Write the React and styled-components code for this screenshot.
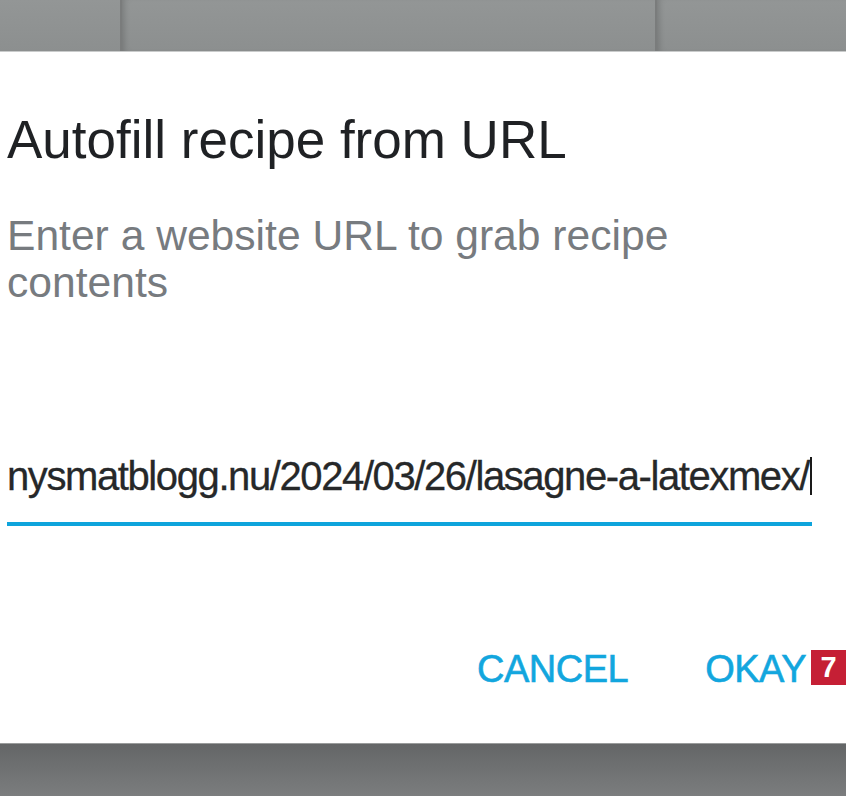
import React from 'react';
import styled, { createGlobalStyle } from 'styled-components';

const GlobalStyle = createGlobalStyle`
  html, body {
    margin: 0;
    padding: 0;
    background: #7b7e7f;
  }
  body {
    font-family: "Liberation Sans", Arial, sans-serif;
  }
`;

const App = () => (
  <>
    <GlobalStyle />
    <Page>
      <TopBackdrop>
        <Panel />
        <Panel edge />
        <Panel edge />
      </TopBackdrop>
      <Dialog>
        <Title>Autofill recipe from URL</Title>
        <Subtitle>Enter a website URL to grab recipe contents</Subtitle>
        <Field>
          <FieldText>
            nysmatblogg.nu/2024/03/26/lasagne-a-latexmex/
            <Caret />
          </FieldText>
        </Field>
        <Actions>
          <ActionButton>CANCEL</ActionButton>
          <ActionButton>
            OKAY
            <Badge>7</Badge>
          </ActionButton>
        </Actions>
      </Dialog>
      <BottomBackdrop />
    </Page>
  </>
);

export default App;

const Page = styled.div`
  width: 846px;
  height: 796px;
  display: flex;
  flex-direction: column;
  overflow: hidden;
`;

const TopBackdrop = styled.div`
  height: 52px;
  display: grid;
  grid-template-columns: 120px 535px 1fr;
  border-bottom: 1px solid #c9cbcb;
  box-sizing: border-box;
`;

const Panel = styled.div`
  background: linear-gradient(#939696, #8c8f8f);
  ${(p) =>
    p.edge &&
    `
    border-left: 2px solid #7a7c7c;
    box-shadow: inset 6px 0 6px -4px rgba(0, 0, 0, 0.18);
  `}
`;

const Dialog = styled.div`
  height: 691px;
  background: #ffffff;
  box-sizing: border-box;
  padding: 0 34px 0 7px;
  display: flex;
  flex-direction: column;
`;

const Title = styled.h1`
  margin: 58px 0 0;
  font-size: 53px;
  line-height: 60px;
  font-weight: 400;
  color: #1f2124;
`;

const Subtitle = styled.p`
  margin: 42px 0 0;
  font-size: 42.6px;
  line-height: 47px;
  color: #777b7f;
`;

const Field = styled.div`
  margin-top: 146px;
  padding-bottom: 22px;
  border-bottom: 4px solid #0ea4dc;
`;

const FieldText = styled.div`
  font-size: 40px;
  line-height: 48px;
  color: #262829;
  letter-spacing: -1.4px;
  white-space: nowrap;
  display: flex;
  align-items: center;
  -webkit-text-stroke: 0.3px #262829;
`;

const Caret = styled.span`
  display: inline-block;
  width: 2px;
  height: 38px;
  margin-left: 1px;
  background: #1a1a1a;
`;

const Actions = styled.div`
  margin-top: 125px;
  margin-right: 6px;
  display: flex;
  justify-content: flex-end;
  gap: 77px;
`;

const ActionButton = styled.span`
  position: relative;
  font-size: 38px;
  line-height: 37px;
  color: #12a6de;
  letter-spacing: -0.5px;
  -webkit-text-stroke: 0.6px #12a6de;
`;

const Badge = styled.span`
  position: absolute;
  left: calc(100% + 5px);
  top: -1px;
  width: 35px;
  height: 35px;
  background: #c51f35;
  color: #ffffff;
  font-weight: 700;
  font-size: 29px;
  line-height: 35px;
  text-align: center;
  letter-spacing: 0;
  -webkit-text-stroke: 0;
`;

const BottomBackdrop = styled.div`
  flex: 1;
  border-top: 1px solid #9a9c9c;
  background: linear-gradient(#646667, #7b7d7e);
`;
